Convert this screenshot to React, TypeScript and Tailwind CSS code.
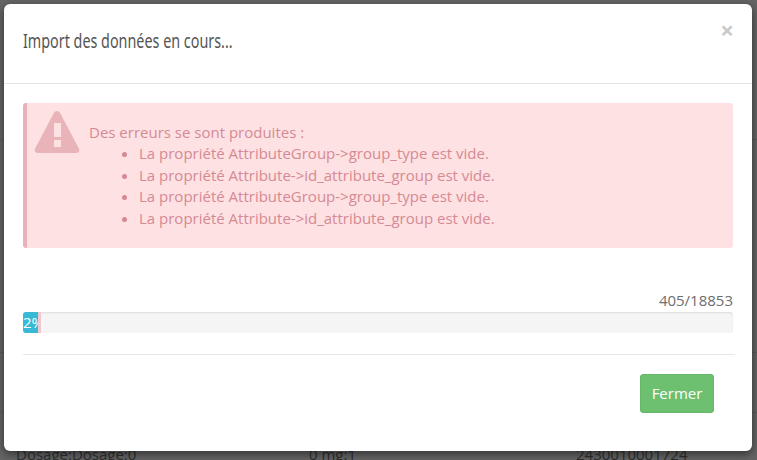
import React from "react";

const errors = [
  "La propriété AttributeGroup->group_type est vide.",
  "La propriété Attribute->id_attribute_group est vide.",
  "La propriété AttributeGroup->group_type est vide.",
  "La propriété Attribute->id_attribute_group est vide.",
];

export default function App() {
  return (
    <div className="relative w-[757px] h-[460px] overflow-hidden bg-[#646464] font-['Open_Sans',sans-serif]">
      {/* page behind the backdrop */}
      <div className="pt-[139px] text-[#2e2e2e] text-[15px] leading-[20px]">
        <div className="h-[213px] border-t border-[#5a5a5a]" />
        <div className="h-[60px] border-t border-[#5a5a5a]" />
        <div className="flex pl-4 pt-[31px] border-t border-[#5a5a5a]">
          <span className="w-[293px]">Dosage:Dosage:0</span>
          <span className="w-[267px]">0 mg:1</span>
          <span>2430010001724</span>
        </div>
      </div>

      {/* modal */}
      <div className="absolute left-1 top-1 w-[748px] h-[447px] bg-white rounded-md shadow-[0_3px_9px_rgba(0,0,0,0.5)] flex flex-col">
        <div className="relative h-[80px] shrink-0 border-b border-[#e5e5e5] pl-[19px] pt-[24px]">
          <h4 className="text-[#555] text-[19px] leading-[26px] font-['Noto_Sans',sans-serif] origin-left scale-x-[0.755] whitespace-nowrap">
            Import des données en cours...
          </h4>
          <span className="absolute right-[18px] top-[13px] text-[#c9c9c9] text-[24px] font-bold leading-[26px]">×</span>
        </div>

        <div className="px-[19px] pt-[19px]">
          <div className="h-[145px] bg-[#fee1e3] border-l-4 border-[#e5b3b9] rounded-[3px] text-[#d58a93] text-[15px] leading-[21.5px] flex pt-[18.6px] pl-[8px]">
            <svg width="46" height="44" viewBox="0 0 46 44" className="shrink-0 -mt-[10.6px] -ml-px mr-[9px]">
              <path fillRule="evenodd" fill="#e8b3b9" d="M23 0c1.300 0 2.400.7 3 1.800l19 36c1.100 2.100-.4 4.200-2.700 4.200H3.700C1.400 42-.1 39.900 1 37.800l19-36C20.600.7 21.700 0 23 0zM20 12v14h7V12zm0 17v7h7v-7z" />
            </svg>
            <div className="whitespace-nowrap">
              <div>Des erreurs se sont produites :</div>
              <ul className="list-disc pl-[50px]">
                {errors.map((e, i) => (
                  <li key={i}>{e}</li>
                ))}
              </ul>
            </div>
          </div>

          <div className="mt-[42px] mb-[2px] text-right text-[#6e6e6e] text-[15px] leading-[20px]">405/18853</div>
          <div className="h-[21px] bg-[#f5f5f5] rounded-[3px] shadow-[inset_0_1px_2px_rgba(0,0,0,0.1)] flex overflow-hidden">
            <div className="w-[15px] bg-[#38b9d6] text-white text-[15px] leading-[21px] whitespace-nowrap">2%</div>
            <div className="w-[3px] bg-[#efc9d2]" />
          </div>
          <div className="mt-[21px] mr-[-2px] border-t border-[#e8e8e8]" />
          <div className="flex justify-end pr-[19px] pt-[19px]">
            <button className="w-[74px] h-[39px] rounded-[3px] bg-[#6cc070] border border-[#64b868] text-white text-[15px]">Fermer</button>
          </div>
        </div>
      </div>
    </div>
  );
}
